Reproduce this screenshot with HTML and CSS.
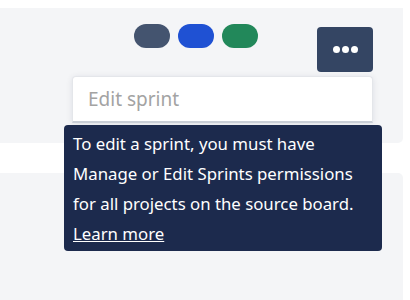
FILE: index.html
```html
<!DOCTYPE html>
<html>
<head>
<meta charset="utf-8">
<link rel="stylesheet" href="styles.css">
</head>
<body>
<div class="page">
  <div class="panel panel-top">
    <div class="pills">
      <span class="pill pill-slate"></span>
      <span class="pill pill-blue"></span>
      <span class="pill pill-green"></span>
    </div>
    <button class="more-btn" type="button" aria-label="More">
      <span class="dot"></span><span class="dot"></span><span class="dot"></span>
    </button>
  </div>
  <div class="gap"></div>
  <div class="panel panel-bottom"></div>

  <div class="popup">
    <div class="menu-item">Edit sprint</div>
    <div class="tooltip">
      To edit a sprint, you must have<br>
      Manage or Edit Sprints permissions<br>
      for all projects on the source board.<br>
      <a class="learn" href="#">Learn more</a>
    </div>
  </div>
</div>
</body>
</html>
```

FILE: styles.css
```css
html, body {
  margin: 0;
  padding: 0;
  background: #ffffff;
  font-family: "Noto Sans", "Open Sans", sans-serif;
}

.page {
  position: relative;
  width: 410px;
  height: 300px;
  padding-top: 8px;
  box-sizing: border-box;
  overflow: hidden;
}

.panel {
  width: 403px;
  background: #f4f5f7;
}

.panel-top {
  height: 135px;
  border-radius: 0 0 5px 0;
  display: flex;
  align-items: flex-start;
  box-sizing: border-box;
  padding-left: 134px;
  padding-right: 30px;
}

.gap {
  height: 30px;
}

.panel-bottom {
  height: 127px;
  border-radius: 0 5px 0 0;
}

.pills {
  display: flex;
  gap: 8px;
  margin-top: 16px;
}

.pill {
  display: block;
  width: 36px;
  height: 24px;
  border-radius: 12px;
}

.pill-slate { background: #44546f; }
.pill-blue { background: #1f51d3; }
.pill-green { background: #22885a; }

.more-btn {
  margin-left: auto;
  margin-top: 19px;
  width: 56px;
  height: 45px;
  border: 0;
  padding: 0;
  border-radius: 4px;
  background: #344563;
  display: flex;
  align-items: center;
  justify-content: center;
  gap: 2px;
}

.dot {
  display: block;
  width: 7px;
  height: 7px;
  border-radius: 50%;
  background: #ffffff;
}

.popup {
  position: absolute;
  left: 64px;
  top: 76px;
  width: 318px;
}

.menu-item {
  margin-left: 8px;
  width: 301px;
  height: 47px;
  box-sizing: border-box;
  background: #ffffff;
  border: 1px solid #e4e6ea;
  border-bottom: 2px solid #c9ced6;
  border-radius: 4px 4px 0 0;
  box-shadow: 0 1px 6px rgba(9, 30, 66, 0.10);
  padding-left: 15px;
  font-size: 19px;
  line-height: 44px;
  color: #a3a3a3;
}

.tooltip {
  margin-top: 2px;
  background: #1c2a4d;
  border-radius: 4px;
  color: #ffffff;
  font-size: 16.8px;
  line-height: 30px;
  padding: 4px 9px 2px 9px;
  box-sizing: border-box;
  height: 126px;
  white-space: nowrap;
}

.learn {
  color: #ffffff;
  text-decoration: underline;
}
```
